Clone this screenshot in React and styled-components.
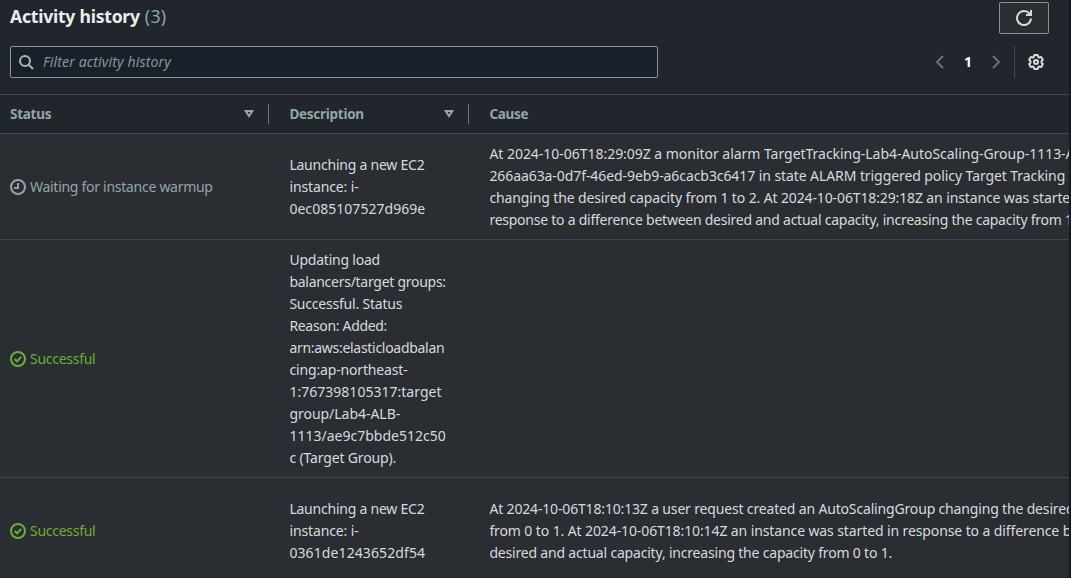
import React from "react";
import styled, { createGlobalStyle } from "styled-components";

const Global = createGlobalStyle`
  * { box-sizing: border-box; }
  body {
    margin: 0;
    overflow: hidden;
    background: #16191f;
    color: #d5dbdb;
    font: 14px/22px "Noto Sans", "Open Sans", sans-serif;
  }
`;

const Panel = styled.main`
  width: 1071px;
  height: 578px;
  overflow: hidden;
  background: #2a2e33;
  border-right: 2px solid #16191f;
  border-bottom: 1px solid #241c24;
`;

const Header = styled.header`
  height: 94px;
  padding: 2px 20px 0 10px;
  background: #21252c;
`;

const TitleRow = styled.div`
  display: flex;
  justify-content: space-between;
  height: 44px;
`;

const Title = styled.h2`
  display: flex;
  gap: 5px;
  margin: 0;
  padding-top: 3px;
  color: #eaeded;
  font-size: 17.6px;
  line-height: 22px;
  letter-spacing: -0.25px;
`;

const Count = styled.span`
  color: #95a5a6;
  font-weight: 400;
  letter-spacing: 0.3px;
`;

const RefreshButton = styled.button`
  display: flex;
  align-items: center;
  justify-content: center;
  width: 50px;
  height: 32px;
  padding: 0;
  border: 1px solid #879596;
  border-radius: 2px;
  background: #2a2e33;
`;

const ToolRow = styled.div`
  display: flex;
  justify-content: space-between;
  height: 32px;
`;

const SearchField = styled.label`
  display: flex;
  align-items: center;
  gap: 9px;
  width: 648px;
  padding-left: 7px;
  border: 1px solid #879596;
  border-radius: 2px;
  background: #1a2029;
`;

const SearchInput = styled.input`
  flex: 1;
  padding: 0;
  border: 0;
  outline: 0;
  background: transparent;
  color: #d5dbdb;
  font: inherit;
  &::placeholder {
    color: #879596;
    opacity: 1;
    font-style: italic;
    letter-spacing: 0.14px;
  }
`;

const Pager = styled.nav`
  display: flex;
  align-items: center;
`;

const PageNumber = styled.span`
  width: 40px;
  color: #ffffff;
  font-weight: 700;
  text-align: center;
`;

const Settings = styled.div`
  display: flex;
  align-items: center;
  height: 32px;
  margin-left: 10px;
  padding: 0 5px 0 13px;
  border-left: 1px solid #414750;
`;

const Row = styled.div`
  display: grid;
  grid-template-columns: 269px 200px 1fr;
  align-items: center;
  height: ${(p) => p.$height}px;
  border-bottom: 1px solid #414750;
`;

const HeadRow = styled(Row)`
  border-top: 1px solid #414750;
  background: #21252c;
`;

const HeadCell = styled.div`
  display: flex;
  align-items: center;
  justify-content: space-between;
  height: 20px;
  padding: 0 11px 0 ${(p) => (p.$first ? 10 : 20.4)}px;
  border-right: ${(p) => (p.$last ? "0" : "1px solid #687078")};
  color: #95a5a6;
  font-size: 13.5px;
  font-weight: 700;
  letter-spacing: -0.27px;
`;

const Status = styled.div`
  display: flex;
  align-items: center;
  gap: 4px;
  padding-left: 10px;
  color: ${(p) => (p.$ok ? "#6aaf35" : "#95a5a6")};
  letter-spacing: -0.28px;
`;

const Cell = styled.div`
  min-width: 0;
  padding-left: 20.4px;
  overflow: hidden;
`;

const Line = styled.div`
  white-space: nowrap;
  letter-spacing: ${(p) => p.$track}px;
`;

const Glyph = styled.svg`
  flex: none;
`;

const Icon = ({ size = 16, width = 2, color = "currentColor", children }) => (
  <Glyph
    width={size}
    height={size}
    viewBox="0 0 16 16"
    fill="none"
    stroke={color}
    strokeWidth={width}
  >
    {children}
  </Glyph>
);

const SearchIcon = () => (
  <Icon color="#aab7b8">
    <circle cx="7" cy="7" r="5" />
    <path d="M10.6 10.6 15 15" />
  </Icon>
);

const RefreshIcon = () => (
  <Icon color="#d5dbdb">
    <path d="M15 8.5A7 7 0 1 1 13.5 3.7L14.5 5" />
    <path d="M10 5h5V0" />
  </Icon>
);

const ArrowIcon = ({ right }) => (
  <Icon color="#687078">
    <path d={right ? "M5 2l6 6-6 6" : "M11 2L5 8l6 6"} />
  </Icon>
);

const GearIcon = () => (
  <Icon color="#d5dbdb">
    <path
      strokeLinejoin="round"
      d="M6.3 1h3.4l.5 1.9 1.1.6 1.9-.5 1.7 2.9L13.5 7.3v1.4l1.4 1.4-1.7 2.9-1.9-.5-1.1.6-.5 1.9H6.3l-.5-1.9-1.1-.6-1.9.5-1.7-2.9 1.4-1.4V7.3L1.1 5.9 2.8 3l1.9.5 1.1-.6z"
    />
    <circle cx="8" cy="8" r="2" />
  </Icon>
);

const SortIcon = () => (
  <Icon>
    <path d="M4.7 5h6.6L8 10.1z" />
  </Icon>
);

const PendingIcon = () => (
  <Icon>
    <circle cx="8" cy="8" r="7" />
    <path d="M8 4v5H4" />
  </Icon>
);

const SuccessIcon = () => (
  <Icon>
    <circle cx="8" cy="8" r="7" />
    <path d="m4.6 8 2.5 2.3 4.1-4.4" />
  </Icon>
);

const activities = [
  {
    ok: false,
    status: "Waiting for instance warmup",
    height: 106,
    description: [
      ["Launching a new EC2", -0.23],
      ["instance: i-", -0.12],
      ["0ec085107527d969e", 0.04],
    ],
    cause: [
      ["At 2024-10-06T18:29:09Z a monitor alarm TargetTracking-Lab4-AutoScaling-Group-1113-A", -0.03],
      ["266aa63a-0d7f-46ed-9eb9-a6cacb3c6417 in state ALARM triggered policy Target Tracking", -0.08],
      ["changing the desired capacity from 1 to 2. At 2024-10-06T18:29:18Z an instance was started", -0.125],
      ["response to a difference between desired and actual capacity, increasing the capacity from 1", -0.245],
    ],
  },
  {
    ok: true,
    status: "Successful",
    height: 238,
    description: [
      ["Updating load", -0.22],
      ["balancers/target groups:", -0.27],
      ["Successful. Status", -0.21],
      ["Reason: Added:", -0.32],
      ["arn:aws:elasticloadbalan", -0.29],
      ["cing:ap-northeast-", -0.15],
      ["1:767398105317:target", 0.02],
      ["group/Lab4-ALB-", -0.03],
      ["1113/ae9c7bbde512c50", 0.01],
      ["c (Target Group).", -0.15],
    ],
    cause: [],
  },
  {
    ok: true,
    status: "Successful",
    height: 106,
    description: [
      ["Launching a new EC2", -0.23],
      ["instance: i-", -0.12],
      ["0361de1243652df54", 0.1],
    ],
    cause: [
      ["At 2024-10-06T18:10:13Z a user request created an AutoScalingGroup changing the desired", -0.163],
      ["from 0 to 1. At 2024-10-06T18:10:14Z an instance was started in response to a difference b", -0.108],
      ["desired and actual capacity, increasing the capacity from 0 to 1.", -0.19],
    ],
  },
];

const Lines = ({ items }) => (
  <Cell>
    {items.map(([text, track]) => (
      <Line key={text} $track={track}>
        {text}
      </Line>
    ))}
  </Cell>
);

export default function App() {
  return (
    <Panel>
      <Global />
      <Header>
        <TitleRow>
          <Title>
            Activity history <Count>(3)</Count>
          </Title>
          <RefreshButton aria-label="Refresh">
            <RefreshIcon />
          </RefreshButton>
        </TitleRow>
        <ToolRow>
          <SearchField>
            <SearchIcon />
            <SearchInput placeholder="Filter activity history" />
          </SearchField>
          <Pager>
            <ArrowIcon />
            <PageNumber>1</PageNumber>
            <ArrowIcon right />
            <Settings>
              <GearIcon />
            </Settings>
          </Pager>
        </ToolRow>
      </Header>
      <HeadRow $height={40}>
        <HeadCell $first>
          Status <SortIcon />
        </HeadCell>
        <HeadCell>
          Description <SortIcon />
        </HeadCell>
        <HeadCell $last>Cause</HeadCell>
      </HeadRow>
      {activities.map((a, i) => (
        <Row key={i} $height={a.height}>
          <Status $ok={a.ok}>
            {a.ok ? <SuccessIcon /> : <PendingIcon />}
            {a.status}
          </Status>
          <Lines items={a.description} />
          <Lines items={a.cause} />
        </Row>
      ))}
    </Panel>
  );
}
